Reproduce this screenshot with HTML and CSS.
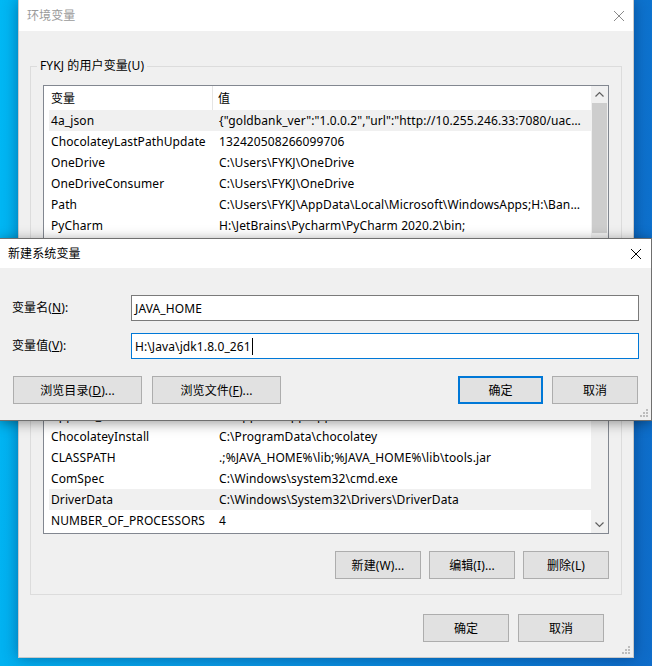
FILE: index.html
```html
<!DOCTYPE html>
<html lang="zh-CN">
<head>
<meta charset="utf-8">
<title>环境变量</title>
<link rel="stylesheet" href="styles.css">
</head>
<body>
<div class="desktop">
  <div class="win main-win">
    <div class="titlebar">
      <span class="title inactive">环境变量</span>
      <svg class="close inactive-x" width="12" height="12" viewBox="0 0 12 12"><path d="M1 1L11 11M11 1L1 11" stroke="currentColor" stroke-width="1" fill="none"/></svg>
    </div>
    <div class="win-body">
      <fieldset class="group">
        <legend>FYKJ 的用户变量(U)</legend>
        <div class="listbox user-list">
          <div class="list-main">
            <div class="list-header"><div class="hcol hname">变量</div><div class="hcol hval">值</div></div>
            <div class="row sel"><div class="cname">4a_json</div><div class="cval">{"goldbank_ver":"1.0.0.2","url":"http://10.255.246.33:7080/uac/login","token":"a81f"}</div></div>
            <div class="row"><div class="cname">ChocolateyLastPathUpdate</div><div class="cval">132420508266099706</div></div>
            <div class="row"><div class="cname">OneDrive</div><div class="cval">C:\Users\FYKJ\OneDrive</div></div>
            <div class="row"><div class="cname">OneDriveConsumer</div><div class="cval">C:\Users\FYKJ\OneDrive</div></div>
            <div class="row"><div class="cname">Path</div><div class="cval">C:\Users\FYKJ\AppData\Local\Microsoft\WindowsApps;H:\Bandizip\;C:\Users\FYKJ\.dotnet\tools</div></div>
            <div class="row"><div class="cname">PyCharm</div><div class="cval">H:\JetBrains\Pycharm\PyCharm 2020.2\bin;</div></div>
            <div class="row"><div class="cname">TEMP</div><div class="cval">C:\Users\FYKJ\AppData\Local\Temp</div></div>
            <div class="row"><div class="cname">TMP</div><div class="cval">C:\Users\FYKJ\AppData\Local\Temp</div></div>
          </div>
          <div class="vscroll">
            <svg class="sarrow" width="17" height="17" viewBox="0 0 17 17"><path d="M4.5 10.5L8.5 6.5L12.5 10.5" stroke="#606060" stroke-width="1.2" fill="none"/></svg>
            <div class="thumb user-thumb"></div>
            <div class="track"></div>
          </div>
        </div>
        <div class="btn-row group-btns">
          <button class="btn">新建(W)...</button>
          <button class="btn">编辑(I)...</button>
          <button class="btn">删除(L)</button>
        </div>
      </fieldset>

      <fieldset class="group sys-group">
        <legend>系统变量(S)</legend>
        <div class="listbox sys-list">
          <div class="list-main">
            <div class="list-header"><div class="hcol hname">变量</div><div class="hcol hval">值</div></div>
            <div class="row"><div class="cname">ACSetupSvcPort</div><div class="cval">23210</div></div>
            <div class="row"><div class="cname">ACSvcPort</div><div class="cval">17532</div></div>
            <div class="row"><div class="cname">Appium_HOME</div><div class="cval">C:\Appium\app\appium</div></div>
            <div class="row"><div class="cname">ChocolateyInstall</div><div class="cval">C:\ProgramData\chocolatey</div></div>
            <div class="row"><div class="cname">CLASSPATH</div><div class="cval">.;%JAVA_HOME%\lib;%JAVA_HOME%\lib\tools.jar</div></div>
            <div class="row"><div class="cname">ComSpec</div><div class="cval">C:\Windows\system32\cmd.exe</div></div>
            <div class="row sel"><div class="cname">DriverData</div><div class="cval">C:\Windows\System32\Drivers\DriverData</div></div>
            <div class="row"><div class="cname">NUMBER_OF_PROCESSORS</div><div class="cval">4</div></div>
            <div class="row"><div class="cname">OS</div><div class="cval">Windows_NT</div></div>
          </div>
          <div class="vscroll">
            <div class="sarrow-space"></div>
            <div class="thumb sys-thumb"></div>
            <div class="track"></div>
            <svg class="sarrow" width="17" height="17" viewBox="0 0 17 17"><path d="M4.5 6.5L8.5 10.5L12.5 6.5" stroke="#606060" stroke-width="1.2" fill="none"/></svg>
          </div>
        </div>
        <div class="btn-row group-btns">
          <button class="btn">新建(W)...</button>
          <button class="btn">编辑(I)...</button>
          <button class="btn">删除(L)</button>
        </div>
      </fieldset>

      <div class="btn-row main-btns">
        <button class="btn">确定</button>
        <button class="btn">取消</button>
      </div>
    </div>
    <svg class="grip main-grip" width="10" height="10" viewBox="0 0 10 10"><g fill="#bdbdbd"><rect x="7" y="1" width="2" height="2"/><rect x="4" y="4" width="2" height="2"/><rect x="7" y="4" width="2" height="2"/><rect x="1" y="7" width="2" height="2"/><rect x="4" y="7" width="2" height="2"/><rect x="7" y="7" width="2" height="2"/></g></svg>
  </div>

  <div class="win dialog">
    <div class="titlebar dlg-titlebar">
      <span class="title">新建系统变量</span>
      <svg class="close" width="12" height="12" viewBox="0 0 12 12"><path d="M1 1L11 11M11 1L1 11" stroke="#000" stroke-width="1" fill="none"/></svg>
    </div>
    <div class="dlg-body">
      <div class="form">
        <label class="flabel">变量名(<u>N</u>):</label>
        <div class="input">JAVA_HOME</div>
        <label class="flabel">变量值(<u>V</u>):</label>
        <div class="input focused">H:\Java\jdk1.8.0_261<span class="caret"></span></div>
      </div>
      <div class="btn-row dlg-btns">
        <button class="btn wide">浏览目录(<u>D</u>)...</button>
        <button class="btn wide">浏览文件(<u>F</u>)...</button>
        <span class="spacer"></span>
        <button class="btn default">确定</button>
        <button class="btn">取消</button>
      </div>
    </div>
    <svg class="grip dlg-grip" width="10" height="10" viewBox="0 0 10 10"><g fill="#bdbdbd"><rect x="7" y="1" width="2" height="2"/><rect x="4" y="4" width="2" height="2"/><rect x="7" y="4" width="2" height="2"/><rect x="1" y="7" width="2" height="2"/><rect x="4" y="7" width="2" height="2"/><rect x="7" y="7" width="2" height="2"/></g></svg>
  </div>
</div>
</body>
</html>
```

FILE: styles.css
```css
* { box-sizing: border-box; }
html, body {
  margin: 0;
  padding: 0;
  width: 652px;
  height: 666px;
  overflow: hidden;
}
body {
  font-family: "Noto Sans", "Noto Sans CJK SC", sans-serif;
  font-size: 12px;
  letter-spacing: 0.1px;
  color: #000;
}
.desktop {
  position: relative;
  width: 652px;
  height: 666px;
  background: linear-gradient(95deg, #00b8f4 0%, #0a9be6 40%, #0a7fd8 75%, #0f6cc9 100%);
  overflow: hidden;
}
.win {
  position: absolute;
  background: #f0f0f0;
}
.main-win {
  left: 18px;
  top: 0;
  width: 616px;
  height: 658px;
  box-shadow: 0 0 14px rgba(0, 30, 80, 0.45);
  border: 1px solid #c9c9c9;
  border-top: none;
}
.titlebar {
  height: 31px;
  background: #fff;
  display: flex;
  align-items: center;
  justify-content: space-between;
  padding: 0 8px 0 8px;
}
.title { line-height: 16px; }
.title.inactive { color: #9a9a9a; }
.inactive-x { color: #8a8a8a; }
.close { display: block; }

.win-body {
  padding: 27px 11px 0 11px;
}
.group {
  margin: 0;
  border: 1px solid #dcdcdc;
  padding: 11px 12px 15px 12px;
  min-width: 0;
}
.group legend {
  margin-left: -6px;
  padding: 0 3px;
  line-height: 16px;
  height: 16px;
}
.sys-group { margin-top: 3px; }

.listbox {
  display: flex;
  background: #fff;
  border: 1px solid #828790;
  overflow: hidden;
}
.user-list { height: 162px; }
.sys-list { height: 196px; }
.list-main {
  flex: 1;
  min-width: 0;
  overflow: hidden;
}
.list-header {
  display: flex;
  height: 24px;
  align-items: stretch;
}
.hcol {
  display: flex;
  align-items: center;
}
.hname {
  width: 169px;
  padding-left: 7px;
  border-right: 1px solid #e5e5e5;
}
.hval {
  flex: 1;
  padding-left: 5px;
}
.row {
  display: flex;
  height: 21px;
  align-items: center;
  margin-left: 5px;
  white-space: nowrap;
}
.row.sel { background: #f0f0f0; }
.cname {
  width: 164px;
  padding-left: 2px;
  flex: none;
  overflow: hidden;
}
.cval {
  flex: 1;
  min-width: 0;
  padding-left: 6px;
  padding-right: 7px;
  overflow: hidden;
  text-overflow: ellipsis;
}
.vscroll {
  width: 17px;
  flex: none;
  background: #f0f0f0;
  display: flex;
  flex-direction: column;
}
.sarrow { display: block; flex: none; }
.sarrow-space { height: 17px; flex: none; }
.thumb {
  margin: 0 1px;
  background: #cdcdcd;
  flex: none;
}
.user-thumb { height: 130px; }
.sys-thumb { height: 60px; }
.track { flex: 1; }

.btn-row {
  display: flex;
  align-items: center;
}
.btn {
  font: inherit;
  letter-spacing: inherit;
  color: #000;
  height: 28px;
  width: 86px;
  padding: 0;
  background: #e1e1e1;
  border: 1px solid #adadad;
  border-radius: 0;
  display: flex;
  align-items: center;
  justify-content: center;
}
.group-btns {
  margin-top: 17px;
  justify-content: flex-end;
  gap: 8px;
}
.main-btns {
  margin-top: 19px;
  justify-content: flex-end;
  gap: 9px;
  padding-right: 18px;
}
.grip {
  position: absolute;
  right: 2px;
  bottom: 2px;
}

.dialog {
  left: -1px;
  top: 238px;
  width: 653px;
  height: 183px;
  border: 1px solid #6f6f6f;
  box-shadow: 0 2px 12px rgba(0, 0, 0, 0.4);
}
.dlg-titlebar {
  height: 29px;
  padding: 0 9px 0 8px;
}
.dlg-body {
  padding: 27px 12px 0 12px;
}
.form {
  display: grid;
  grid-template-columns: 119px 1fr;
  row-gap: 12px;
  align-items: center;
}
.flabel { line-height: 16px; }
.input {
  height: 26px;
  background: #fff;
  border: 1px solid #7a7a7a;
  padding-left: 3px;
  display: flex;
  align-items: center;
  white-space: nowrap;
}
.input.focused { border-color: #0078d7; }
.caret {
  display: inline-block;
  width: 1px;
  height: 17px;
  background: #000;
  margin-left: 1px;
}
.dlg-btns {
  margin-top: 17px;
  padding-left: 1px;
  padding-right: 1px;
}
.btn.wide { width: 129px; margin-right: 10px; }
.spacer { flex: 1; }
.btn.default {
  border: 2px solid #0078d7;
  width: 85px;
  margin-right: 9px;
}
```
